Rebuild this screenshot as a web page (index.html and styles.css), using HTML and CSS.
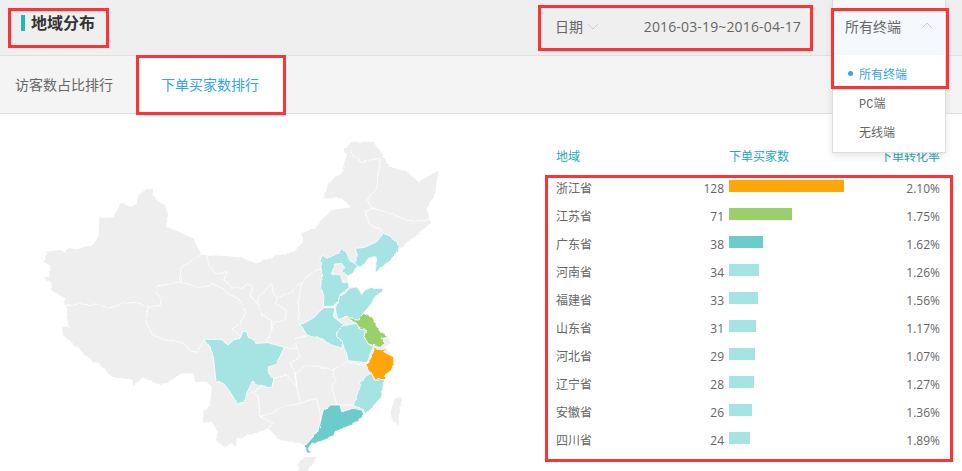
FILE: index.html
```html
<!DOCTYPE html>
<html lang="zh-CN">
<head>
<meta charset="utf-8">
<title>地域分布</title>
<link rel="stylesheet" href="styles.css">
</head>
<body>
<div class="page">
  <header class="top">
    <h1 class="title">地域分布</h1>
    <div class="date">
      <span class="date-label">日期</span>
      <svg class="chev" width="12" height="7" viewBox="0 0 12 7"><path d="M1 1l5 5 5-5"/></svg>
      <span class="date-range">2016-03-19~2016-04-17</span>
    </div>
  </header>
  <nav class="tabs">
    <a class="tab">访客数占比排行</a>
    <a class="tab tab-active">下单买家数排行</a>
  </nav>
  <main class="main">
    <svg class="map" width="440" height="341" viewBox="0 0 1320 1023">
      <defs>
        <filter id="rough" x="-5%" y="-5%" width="110%" height="110%">
          <feTurbulence type="fractalNoise" baseFrequency="0.045" numOctaves="2" seed="4"/>
          <feDisplacementMap in="SourceGraphic" scale="9" xChannelSelector="R" yChannelSelector="G"/>
        </filter>
      </defs>
      <g class="rough">
      <path class="land" d="M130 395 140 365 175 360 195 368 205 355 232 358 280 342 297 318 297 265 340 262 362 218 390 230 410 222 415 195 440 176 455 180 470 212 495 225 505 255 498 290 530 302 580 325 603 375 680 378 715 382 770 400 825 378 880 365 910 335 905 310 945 295 975 260 995 240 1055 232 1020 205 972 205 985 160 1025 130 1040 75 1032 55 1060 35 1120 35 1170 110 1220 125 1255 155 1315 122 1305 195 1280 235 1290 280 1240 325 1215 340 1198 355 1170 390 1125 430 1128 405 1125 380 1105 385 1080 412 1072 410 1045 438 1043 455 1048 472 1070 470 1085 490 1105 475 1150 475 1145 485 1125 500 1115 520 1090 550 1120 565 1140 605 1165 622 1172 640 1155 652 1180 680 1182 695 1175 720 1155 735 1152 748 1145 800 1095 855 1070 878 1030 895 1005 905 1000 920 960 935 935 940 925 955 930 970 920 968 915 948 900 938 870 936 840 930 810 900 805 895 760 912 710 925 708 952 695 940 670 950 648 930 655 905 635 875 608 878 610 850 630 825 635 770 620 755 585 755 580 730 545 730 500 760 475 762 430 745 400 765 398 750 335 740 295 700 280 695 238 658 220 645 190 615 185 590 205 590 200 530 190 525 195 505 155 480 155 460 132 442 148 440 148 405Z"/>
      <path class="land" d="M1172 845 1185 805 1203 800 1202 830 1192 888 1175 865Z"/>
      <path class="land" d="M892 1005 915 982 947 980 940 1000 925 1023 895 1023Z"/>
      <g class="borders">
        <path d="M195 527 215 527 240 515 270 528 290 520 325 535 375 520 410 517 445 530 480 527"/>
        <path d="M445 530 438 575 458 615 495 630 550 640 570 662 590 667 612 632"/>
        <path d="M480 527 485 505 468 490 470 470 543 455 541 415 570 395 603 375"/>
        <path d="M543 455 600 475 640 463 670 478 680 490 715 505 737 547 720 580 695 598 720 618"/>
        <path d="M622 375 625 405 645 430 680 425 672 450 695 470 725 475 745 460 760 470 750 500 770 515 790 560 815 568 815 600 800 635"/>
        <path d="M770 515 795 480 815 460 820 490 835 502 825 520 860 540 855 570 820 580 815 600"/>
        <path d="M900 585 895 520 905 455 870 490 835 502"/>
        <path d="M905 455 940 425 965 415"/>
        <path d="M1050 55 1055 70 1085 95 1140 85 1130 175 1100 210 1120 235 1170 250 1220 270 1250 275 1290 265"/>
        <path d="M1120 235 1095 245 1110 285 1140 295 1150 310"/>
        <path d="M885 625 890 655 853 652M890 655 903 680 870 700 885 730 915 708 950 708 985 715 995 720 1040 695 1098 705"/>
        <path d="M885 625 920 618"/>
        <path d="M885 730 890 770 860 735 822 745"/>
        <path d="M885 730 895 800 900 820 950 805 960 850 962 878"/>
        <path d="M995 720 1005 750 995 770 1010 825 1060 825"/>
        <path d="M758 785 775 800 780 860 815 850 840 835 900 820"/>
        <path d="M758 785 790 770 815 772M780 860 820 880 805 895"/>
      </g>
      <g class="tr">
        <path class="p-light" d="M12 628 60 628 85 645 100 630 120 625 130 603 140 605 145 620 170 640 205 638 253 652 240 680 225 705 205 710 205 730 222 745 215 772 195 772 170 765 158 752 140 790 135 815 112 822 90 785 70 760 48 755 40 680 30 655Z"/>
        <path class="p-light" d="M460 825 485 755 500 735 515 730 525 750 552 748 545 800 495 855 488 835 465 830Z"/>
        <path class="p-light" d="M410 605 432 586 470 580 478 595 497 602 492 620 505 640 520 652 498 698 445 692 430 645 428 635 410 620Z"/>
        <path class="p-light" d="M303 585 345 560 370 533 405 533 400 560 432 586 410 605 410 620 428 635 425 655 395 645 350 620 320 615Z"/>
        <path class="p-light" d="M405 535 420 500 450 475 470 470 485 490 505 475 550 475 545 485 525 500 515 520 490 550 475 568 440 562 415 568Z"/>
        <path class="p-light" d="M360 390 368 375 380 385 415 370 425 355 440 368 450 392 465 400 472 410 455 430 445 438 443 455 448 472 420 495 405 528 370 530 372 500 362 470 365 430Z"/>
        <path class="p-hole" d="M395 430 405 402 425 400 435 415 425 425 445 438 443 455 428 458 422 435Z"/>
        <path class="p-light" d="M465 355 472 375 462 398 480 412 495 400 505 385 525 380 528 405 525 430 570 390 595 365 598 350 575 320 550 310 530 335 495 352Z"/>
        <path class="p-mid" d="M362 870 370 840 390 825 420 825 425 845 460 835 485 840 492 855 470 878 430 895 405 905 400 920 360 935 335 940 325 955 330 970 320 968 315 948 340 920 355 900Z"/>
        <path class="p-green" d="M437 562 475 568 490 550 520 565 540 605 565 622 548 625 555 640 540 652 505 642 492 620 497 602 478 595 470 580Z"/>
        <path class="p-orange" d="M497 705 512 685 525 652 545 660 558 650 550 665 580 680 582 695 575 720 555 735 552 748 525 750 515 730Z"/>
      </g>
      </g>
    </svg>
    <section class="table">
      <div class="row head">
        <span>地域</span>
        <span class="head-buy">下单买家数</span>
        <span class="pct">下单转化率</span>
      </div>
      <div class="row"><span>浙江省</span><span class="num">128</span><i class="bar b-orange w115"></i><span class="pct">2.10%</span></div>
      <div class="row"><span>江苏省</span><span class="num">71</span><i class="bar b-green w63"></i><span class="pct">1.75%</span></div>
      <div class="row"><span>广东省</span><span class="num">38</span><i class="bar b-mid w34"></i><span class="pct">1.62%</span></div>
      <div class="row"><span>河南省</span><span class="num">34</span><i class="bar b-light w30"></i><span class="pct">1.26%</span></div>
      <div class="row"><span>福建省</span><span class="num">33</span><i class="bar b-light w29"></i><span class="pct">1.56%</span></div>
      <div class="row"><span>山东省</span><span class="num">31</span><i class="bar b-light w27"></i><span class="pct">1.17%</span></div>
      <div class="row"><span>河北省</span><span class="num">29</span><i class="bar b-light w26"></i><span class="pct">1.07%</span></div>
      <div class="row"><span>辽宁省</span><span class="num">28</span><i class="bar b-light w25"></i><span class="pct">1.27%</span></div>
      <div class="row"><span>安徽省</span><span class="num">26</span><i class="bar b-light w23"></i><span class="pct">1.36%</span></div>
      <div class="row"><span>四川省</span><span class="num">24</span><i class="bar b-light w21"></i><span class="pct">1.89%</span></div>
    </section>
  </main>
  <div class="menu">
    <div class="menu-head">
      <span>所有终端</span>
      <svg class="chev" width="12" height="7" viewBox="0 0 12 7"><path d="M1 6l5-5 5 5"/></svg>
    </div>
    <div class="menu-item menu-on">所有终端</div>
    <div class="menu-item"><span class="mono">PC</span>端</div>
    <div class="menu-item">无线端</div>
  </div>
  <div class="mark mark-title"></div>
  <div class="mark mark-tab"></div>
  <div class="mark mark-date"></div>
  <div class="mark mark-menu"></div>
  <div class="mark mark-table"></div>
</div>
</body>
</html>
```
FILE: styles.css
```css
* { box-sizing: border-box; }
html, body { margin: 0; padding: 0; background: #fff; }
body { font-family: "Open Sans", "Noto Sans CJK SC", sans-serif; color: #666; font-size: 12px; }
.page { position: relative; width: 962px; height: 471px; overflow: hidden; }

.top { height: 56px; background: #efefef; border-bottom: 1px solid #e0e0e0; display: flex; align-items: flex-start; }
.title { margin: 15px 0 0 21px; padding-left: 6px; height: 16px; border-left: 4px solid #27b3c2; font-size: 16px; line-height: 16px; font-weight: 700; color: #333; }
.date { margin-left: 460px; width: 246px; height: 52px; display: flex; align-items: center; font-size: 14px; }
.date-label { margin-right: 4px; }
.date-range { margin-left: auto; letter-spacing: .15px; }
.chev { flex: none; fill: none; stroke: #ccc; stroke-width: 1; }

.tabs { height: 58px; background: #f4f4f4; border-bottom: 1px solid #e0e0e0; display: flex; padding-left: 15px; }
.tab { font-size: 14px; line-height: 57px; }
.tab-active { margin-left: 26px; padding: 0 24px 0 22px; background: #fff; color: #36a3ee; }

.main { display: flex; align-items: flex-start; }
.map { flex: none; margin-top: 16px; display: block; }
.rough { filter: url(#rough); }
.land { fill: #eee; }
.borders path { fill: none; stroke: #fff; stroke-width: 2.5; stroke-linejoin: round; }
.tr path { transform: translateX(600px); stroke: #fff; stroke-width: 2.5; stroke-linejoin: round; }
.p-light { fill: #a6e4e3; }
.p-mid { fill: #6ccbcb; }
.p-green { fill: #9ad06b; }
.p-orange { fill: #ffa60b; }
.p-hole { fill: #eee; }

.table { margin: 28px 0 0 116px; width: 384px; }
.row { height: 28px; display: grid; grid-template-columns: 168px 5px 1fr 60px; grid-template-rows: 28px; line-height: 30px; }
.row > * { grid-row: 1; }
.row > span:first-child { grid-column: 1; }
.row .num { grid-column: 1; text-align: right; }
.row .bar { grid-column: 3; }
.row .pct { grid-column: 4; text-align: right; white-space: nowrap; }
.head { color: #27a9b8; margin-bottom: 4px; }
.head .head-buy { grid-column: 3; white-space: nowrap; }
.head .pct { display: flex; justify-content: flex-end; }
.bar { display: block; height: 12px; margin-top: 6px; }
.b-orange { background: #ffa60b; }
.b-green { background: #9ad06b; }
.b-mid { background: #6ccbcb; }
.b-light { background: #a6e4e3; }
.w115 { width: 115px; } .w63 { width: 63px; } .w34 { width: 34px; } .w30 { width: 30px; }
.w29 { width: 29px; } .w27 { width: 27px; } .w26 { width: 26px; } .w25 { width: 25px; }
.w23 { width: 23px; } .w21 { width: 21px; }

.menu { position: absolute; left: 832px; top: 0; width: 114px; height: 153px; background: #fff; border: 1px solid #ddd; border-top: 0; box-shadow: 0 3px 8px rgba(0,0,0,.1); }
.menu-head { height: 55px; background: #f5f8fd; padding: 0 12px 4px; display: flex; align-items: center; justify-content: space-between; font-size: 14px; }
.menu-item { position: relative; height: 29px; line-height: 31px; padding-left: 26px; }
.menu-head + .menu-item { margin-top: 4px; }
.menu-on { color: #36a3ee; }
.menu-on::before { content: ""; position: absolute; left: 15px; top: 12px; width: 5px; height: 5px; border-radius: 50%; background: #36a3ee; }
.mono { font-family: "Liberation Mono", monospace; font-size: 12px; }

.mark { position: absolute; border: 3px solid #f33; }
.mark-title { left: 8px; top: 8px; width: 101px; height: 40px; }
.mark-tab { left: 136px; top: 55px; width: 150px; height: 60px; }
.mark-date { left: 538px; top: 5px; width: 275px; height: 46px; }
.mark-menu { left: 831px; top: 8px; width: 118px; height: 81px; }
.mark-table { left: 545px; top: 175px; width: 408px; height: 287px; }
```
